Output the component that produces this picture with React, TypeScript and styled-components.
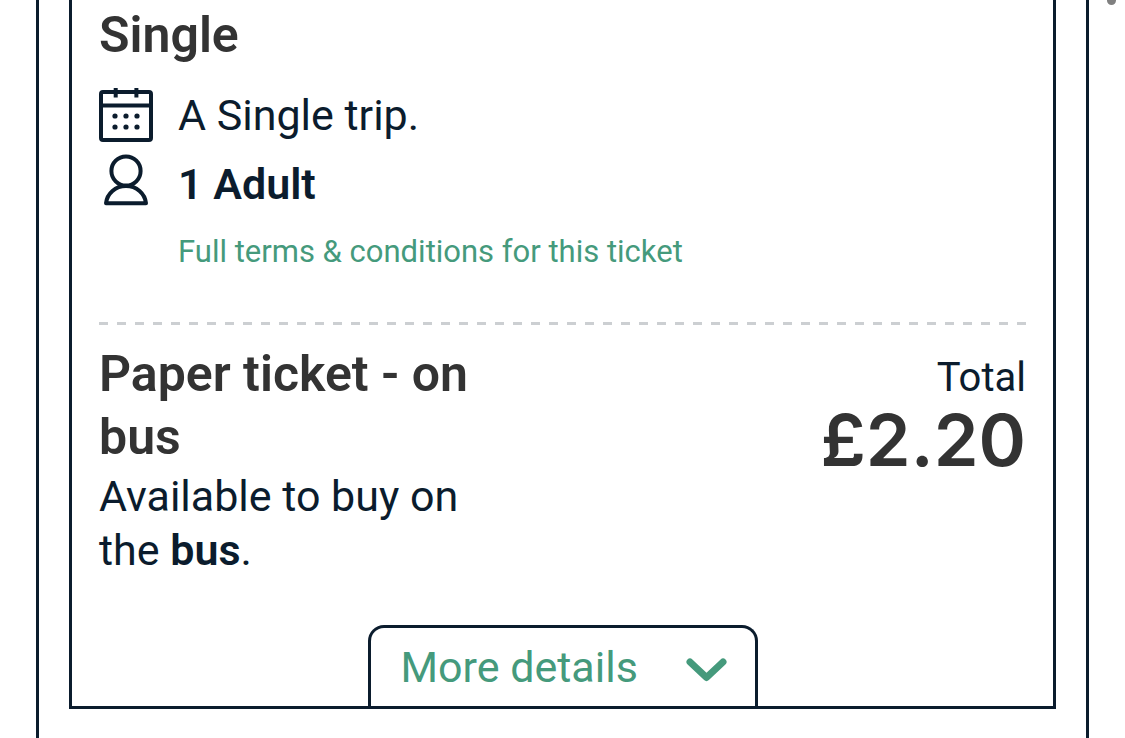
import React from 'react';
import styled, { createGlobalStyle } from 'styled-components';

const navy = '#0b1c2d';
const charcoal = '#333333';
const green = '#459a7c';

const GlobalStyle = createGlobalStyle`
  *, *::before, *::after {
    box-sizing: border-box;
  }
  body {
    margin: 0;
    background: #ffffff;
    color: ${navy};
    font-family: Roboto, "Liberation Sans", sans-serif;
    font-size: 43px;
    line-height: 54px;
  }
`;

const Page = styled.main`
  padding: 0 36px;
`;

const Panel = styled.section`
  min-height: 100vh;
  padding: 0 30px 29px;
  border: solid ${navy};
  border-width: 0 3px;
`;

const Card = styled.article`
  display: flex;
  flex-direction: column;
  padding: 4px 27px 0;
  border: solid ${navy};
  border-width: 0 3px 3px;
`;

const Heading = styled.h2`
  margin: 0;
  color: ${charcoal};
  font-size: 50px;
  font-weight: 600;
  line-height: 63px;
`;

const Facts = styled.ul`
  display: flex;
  flex-direction: column;
  gap: 11px;
  margin: 21px 0 0;
  padding: 0;
  list-style: none;
`;

const Fact = styled.li<{ $strong?: boolean }>`
  display: flex;
  align-items: flex-start;
  gap: 25px;
  font-weight: ${({ $strong }) => ($strong ? 600 : 400)};
  line-height: ${({ $strong }) => ($strong ? 62 : 54)}px;
`;

const Icon = styled.svg`
  flex: none;
  width: 54px;
  height: 54px;
  fill: none;
  stroke: ${navy};
  stroke-width: 4;
  stroke-linejoin: round;
`;

const TermsLink = styled.a`
  align-self: flex-start;
  margin: 14px 0 47px 79px;
  color: ${green};
  font-size: 31px;
  line-height: 46px;
  text-decoration: none;
`;

const Divider = styled.hr`
  width: 100%;
  height: 3px;
  margin: 0;
  border: 0;
  background: repeating-linear-gradient(to right, #cccfd2 0 9px, transparent 9px 18px);
`;

const Summary = styled.div`
  display: flex;
  justify-content: space-between;
  align-items: flex-start;
  padding: 18px 0 48px;
`;

const Purchase = styled.div`
  width: 44%;
`;

const Text = styled.p`
  margin: 0;

  strong {
    font-weight: 600;
  }
`;

const Cost = styled.div`
  padding-top: 8px;
  text-align: right;
`;

const CostLabel = styled.div`
  font-size: 40px;
`;

const Price = styled.div`
  color: ${charcoal};
  font-family: Inter, "Liberation Sans", sans-serif;
  font-size: 72px;
  font-weight: 600;
  line-height: 70px;
`;

const DetailsButton = styled.button`
  align-self: center;
  display: flex;
  align-items: center;
  justify-content: space-between;
  width: 390px;
  padding: 0 28px 0 30px;
  border: 3px solid ${navy};
  border-bottom: 0;
  border-radius: 16px 16px 0 0;
  background: #ffffff;
  color: ${green};
  font: inherit;
  line-height: 78px;
  cursor: pointer;
`;

const Chevron = styled.svg`
  width: 41px;
  height: 24px;
  margin-top: 6px;
  fill: none;
  stroke: ${green};
  stroke-width: 7;
  stroke-linecap: round;
  stroke-linejoin: round;
`;

const ScrollMark = styled.span`
  position: absolute;
  top: 0;
  right: 9px;
  width: 9px;
  height: 5px;
  border-radius: 0 0 5px 5px;
  background: #808080;
`;

const CalendarIcon = () => (
  <Icon viewBox="0 0 54 54" aria-hidden="true">
    <rect x="2" y="4" width="50" height="48" rx="2" />
    <path d="M2 17.5H52M16.7 0V9.5M37.4 0V9.5" />
    <g fill={navy} stroke="none">
      {[28, 39].map((y) => [16, 27, 38].map((x) => <circle key={`${x}-${y}`} cx={x} cy={y} r="2.6" />))}
    </g>
  </Icon>
);

const PersonIcon = () => (
  <Icon viewBox="0 0 54 54" aria-hidden="true">
    <circle cx="27" cy="18" r="14.6" />
    <path d="M7 50.3H47C46 40.5 37.5 33 27 33S8 40.5 7 50.3Z" />
  </Icon>
);

export default function App() {
  return (
    <Page>
      <GlobalStyle />
      <Panel>
        <Card>
          <Heading>Single</Heading>
          <Facts>
            <Fact>
              <CalendarIcon />
              <span>A Single trip.</span>
            </Fact>
            <Fact $strong>
              <PersonIcon />
              <span>1 Adult</span>
            </Fact>
          </Facts>
          <TermsLink href="#terms">Full terms &amp; conditions for this ticket</TermsLink>
          <Divider />
          <Summary>
            <Purchase>
              <Heading>Paper ticket - on bus</Heading>
              <Text>
                Available to buy on the <strong>bus</strong>.
              </Text>
            </Purchase>
            <Cost>
              <CostLabel>Total</CostLabel>
              <Price>£2.20</Price>
            </Cost>
          </Summary>
          <DetailsButton type="button">
            More details
            <Chevron viewBox="0 0 41 24" aria-hidden="true">
              <path d="M4 4L20.5 19.5L37 4" />
            </Chevron>
          </DetailsButton>
        </Card>
      </Panel>
      <ScrollMark />
    </Page>
  );
}
